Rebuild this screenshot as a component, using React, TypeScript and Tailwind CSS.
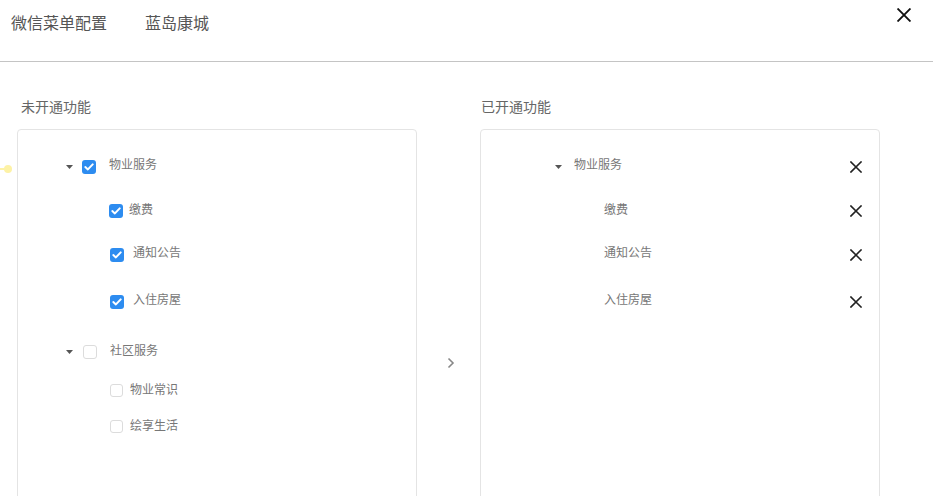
import React from "react";

const font = { fontFamily: '"Noto Sans CJK SC", "Noto Sans", sans-serif' };

function Caret() {
  return (
    <svg width="7" height="4" viewBox="0 0 7 4" className="shrink-0">
      <path d="M0 0 L7 0 L3.5 4 Z" fill="#555" />
    </svg>
  );
}

function Check({ checked, size = 14 }: { checked: boolean; size?: number }) {
  if (checked) {
    return (
      <div
        className="shrink-0 rounded-[3px] bg-[#2d8cf0] flex items-center justify-center"
        style={{ width: size, height: size }}
      >
        <svg width="10" height="8" viewBox="0 0 10 8">
          <path d="M1.3 4.1 L3.9 6.4 L8.7 1.4" fill="none" stroke="#fff" strokeWidth="2" strokeLinecap="round" strokeLinejoin="round" />
        </svg>
      </div>
    );
  }
  return (
    <div
      className="shrink-0 rounded-[3px] border border-[#dcdcdc] bg-white"
      style={{ width: size, height: size }}
    />
  );
}

function XIcon({ size = 12, stroke = 1.6, color = "#222" }: { size?: number; stroke?: number; color?: string }) {
  return (
    <svg width={size} height={size} viewBox="0 0 12 12" className="shrink-0">
      <path d="M1 1 L11 11 M11 1 L1 11" stroke={color} strokeWidth={stroke} strokeLinecap="square" />
    </svg>
  );
}

export default function App() {
  return (
    <div className="relative w-[933px] h-[496px] overflow-hidden bg-white" style={font}>
      {/* header */}
      <div className="h-[62px] border-b border-[#c4c4c4] flex items-start">
        <div className="pt-[10px] pl-[11px] flex text-[16px] leading-[24px] text-[#555]">
          <span>微信菜单配置</span>
          <span className="ml-[38px]">蓝岛康城</span>
        </div>
        <div className="ml-auto mt-[8px] mr-[22px]">
          <XIcon size={14} stroke={1.6} color="#111" />
        </div>
      </div>

      {/* yellow connector dot */}
      <div className="absolute left-0 top-[168px] w-[8px] h-[2px] bg-[#fdf2a6]" />
      <div className="absolute left-[4px] top-[165px] w-[8px] h-[8px] rounded-full bg-[#fdf2a6]" />

      {/* body */}
      <div className="flex pl-[17px] pt-[34px]">
        {/* left column */}
        <div className="w-[400px] flex flex-col">
          <div className="pl-[4px] text-[14px] leading-[20px] text-[#666] mb-[13px]">未开通功能</div>
          <div className="h-[468px] border border-[#e4e4e4] rounded-[4px] flex flex-col pt-[23px] text-[12px] text-[#777]">
            <div className="h-[28px] flex items-center">
              <div className="ml-[48px]"><Caret /></div>
              <div className="ml-[9px]"><Check checked /></div>
              <span className="ml-[13px] mb-[6px]">物业服务</span>
            </div>
            <div className="h-[28px] mt-[16px] flex items-center">
              <div className="ml-[91px]"><Check checked /></div>
              <span className="ml-[6px] mb-[4px]">缴费</span>
            </div>
            <div className="h-[28px] mt-[16px] flex items-center">
              <div className="ml-[92px]"><Check checked /></div>
              <span className="ml-[9px] mb-[6px]">通知公告</span>
            </div>
            <div className="h-[28px] mt-[19px] flex items-center">
              <div className="ml-[92px]"><Check checked /></div>
              <span className="ml-[9px] mb-[6px]">入住房屋</span>
            </div>
            <div className="h-[28px] mt-[22px] flex items-center">
              <div className="ml-[48px]"><Caret /></div>
              <div className="ml-[10px]"><Check checked={false} /></div>
              <span className="ml-[13px] mb-[4px]">社区服务</span>
            </div>
            <div className="h-[28px] mt-[10px] flex items-center">
              <div className="ml-[92px]"><Check checked={false} size={13} /></div>
              <span className="ml-[7px] mb-[2px]">物业常识</span>
            </div>
            <div className="h-[28px] mt-[8px] flex items-center">
              <div className="ml-[92px]"><Check checked={false} size={13} /></div>
              <span className="ml-[7px] mb-[2px]">绘享生活</span>
            </div>
          </div>
        </div>

        {/* middle arrow */}
        <div className="w-[63px] flex flex-col">
          <div className="h-[33px]" />
          <div className="h-[468px] flex items-center justify-center pl-[5px]">
            <svg width="8" height="12" viewBox="0 0 8 12">
              <path d="M1.5 1.5 L6 6 L1.5 10.5" fill="none" stroke="#888" strokeWidth="1.6" />
            </svg>
          </div>
        </div>

        {/* right column */}
        <div className="w-[400px] flex flex-col">
          <div className="pl-[1px] text-[14px] leading-[20px] text-[#666] mb-[13px]">已开通功能</div>
          <div className="h-[468px] border border-[#e4e4e4] rounded-[4px] flex flex-col pt-[23px] pr-[17px] text-[12px] text-[#777]">
            <div className="h-[28px] flex items-center">
              <div className="ml-[74px]"><Caret /></div>
              <span className="ml-[12px] mb-[6px]">物业服务</span>
              <div className="ml-auto"><XIcon /></div>
            </div>
            <div className="h-[28px] mt-[16px] flex items-center">
              <span className="ml-[123px] mb-[5px]">缴费</span>
              <div className="ml-auto"><XIcon /></div>
            </div>
            <div className="h-[28px] mt-[16px] flex items-center">
              <span className="ml-[123px] mb-[6px]">通知公告</span>
              <div className="ml-auto"><XIcon /></div>
            </div>
            <div className="h-[28px] mt-[19px] flex items-center">
              <span className="ml-[123px] mb-[6px]">入住房屋</span>
              <div className="ml-auto"><XIcon /></div>
            </div>
          </div>
        </div>
      </div>
    </div>
  );
}
